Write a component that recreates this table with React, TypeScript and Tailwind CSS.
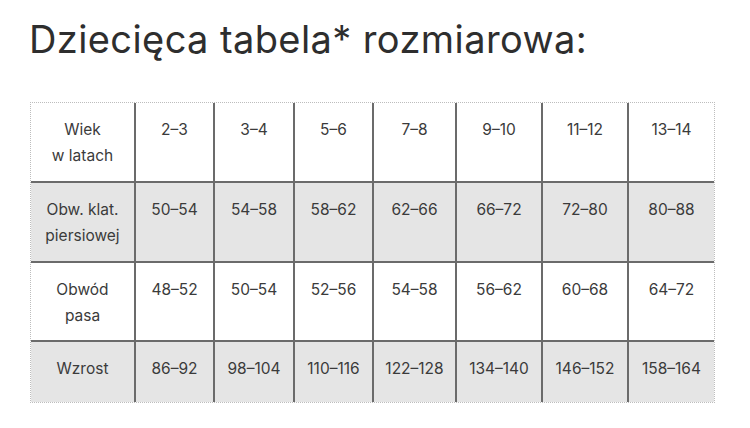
const ROWS: { label: string[]; values: string[]; shaded: boolean; height: string }[] = [
  { label: ["Wiek", "w latach"], values: ["2-3", "3-4", "5-6", "7-8", "9-10", "11-12", "13-14"], shaded: false, height: "h-[79px]" },
  { label: ["Obw. klat.", "piersiowej"], values: ["50-54", "54-58", "58-62", "62-66", "66-72", "72-80", "80-88"], shaded: true, height: "h-[80px]" },
  { label: ["Obwód", "pasa"], values: ["48-52", "50-54", "52-56", "54-58", "56-62", "60-68", "64-72"], shaded: false, height: "h-[79px]" },
  { label: ["Wzrost"], values: ["86-92", "98-104", "110-116", "122-128", "134-140", "146-152", "158-164"], shaded: true, height: "h-[61px]" },
];

const COL_WIDTHS = ["w-[104px]", "w-[79px]", "w-[80px]", "w-[79px]", "w-[83px]", "w-[86px]", "w-[86px]", "w-[86px]"];

export default function App() {
  return (
    <div className="h-[428px] w-[750px] bg-white text-[#3b3b3b]" style={{ fontFamily: "Inter, 'Noto Sans', sans-serif" }}>
      <h1 className="pl-[29px] pt-[16px] text-[38px] font-normal leading-[46px] tracking-[0.4px] text-[#2e2e2e]">
        Dziecięca tabela* rozmiarowa:
      </h1>

      <div className="ml-[30px] mt-[40px] w-[685px] border border-dotted border-[#bdbdbd]">
        <table className="w-full table-fixed border-collapse text-[15.5px] leading-[26px]">
          <colgroup>
            {COL_WIDTHS.map((w, i) => (
              <col key={i} className={w} />
            ))}
          </colgroup>
          <tbody>
            {ROWS.map((row, r) => (
              <tr key={r} className={`${row.height} ${row.shaded ? "bg-[#e5e5e5]" : "bg-white"}`}>
                <td className={`px-1 pt-[14px] text-center align-top ${r > 0 ? "border-t-2 border-[#6b6b6b]" : ""}`}>
                  {row.label.map((l) => (
                    <div key={l}>{l}</div>
                  ))}
                </td>
                {row.values.map((v) => (
                  <td
                    key={v}
                    className={`border-l-2 border-[#6b6b6b] pt-[14px] text-center align-top ${r > 0 ? "border-t-2" : ""}`}
                  >
                    {v.replace("-", "–")}
                  </td>
                ))}
              </tr>
            ))}
          </tbody>
        </table>
      </div>
    </div>
  );
}
